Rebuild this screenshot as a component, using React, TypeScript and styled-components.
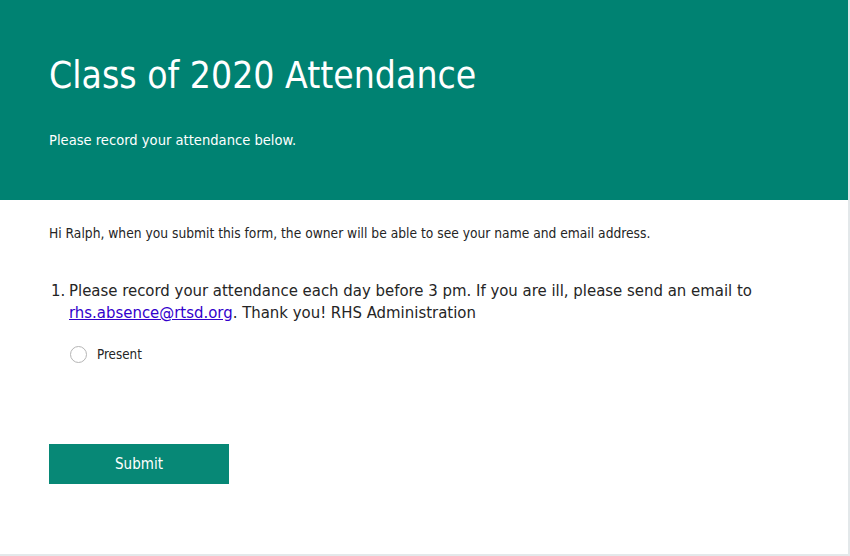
import React from "react";
import styled, { createGlobalStyle } from "styled-components";

const Global = createGlobalStyle`
  html, body { margin: 0; padding: 0; background: #e9eef0; }
  body { font-family: "DejaVu Sans Condensed", "DejaVu Sans", sans-serif; }
  * { box-sizing: border-box; }
`;

const Card = styled.div`
  width: 850px;
  height: 556px;
  background: #ffffff;
  border-right: 2px solid #e3e8ea;
  border-bottom: 2px solid #e3e8ea;
  display: flex;
  flex-direction: column;
`;

const Header = styled.header`
  background: #008272;
  height: 200px;
  padding: 52px 49px 0;
  color: #ffffff;
`;

const Title = styled.h1`
  margin: 0;
  font-size: 37px;
  font-weight: normal;
  line-height: 48px;
`;

const Subtitle = styled.p`
  margin: 30px 0 0;
  font-size: 14.6px;
  line-height: 20px;
`;

const Body = styled.main`
  padding: 24px 49px 0;
  color: #252525;
`;

const Notice = styled.p`
  margin: 0;
  font-size: 13.7px;
  line-height: 18px;
`;

const Question = styled.div`
  margin-top: 38px;
  display: flex;
  font-size: 16.6px;
  line-height: 22px;
  color: #252525;
`;

const Number = styled.span`
  width: 20px;
  padding-left: 2px;
  flex: none;
`;

const QText = styled.div`
  flex: 1;
`;

const Link = styled.a`
  color: #3300cc;
  text-decoration: underline;
`;

const Options = styled.div`
  margin-top: 22px;
  padding-left: 21px;
`;

const Option = styled.label`
  display: flex;
  align-items: center;
  gap: 10px;
  font-size: 13.3px;
  color: #252525;
`;

const Radio = styled.span`
  width: 17px;
  height: 17px;
  border-radius: 50%;
  border: 1px solid #b5b5b5;
  background: #fff;
  flex: none;
`;

const SubmitButton = styled.button`
  margin-top: 81px;
  width: 180px;
  height: 40px;
  border: none;
  background: #078876;
  color: #ffffff;
  font-family: inherit;
  font-size: 15px;
  cursor: pointer;
`;

export default function App() {
  return (
    <>
      <Global />
      <Card>
        <Header>
          <Title>Class of 2020 Attendance</Title>
          <Subtitle>Please record your attendance below.</Subtitle>
        </Header>
        <Body>
          <Notice>
            Hi Ralph, when you submit this form, the owner will be able to see your name and email address.
          </Notice>
          <Question>
            <Number>1.</Number>
            <QText>
              Please record your attendance each day before 3 pm. If you are ill, please send an email to{" "}
              <Link href="#">rhs.absence@rtsd.org</Link>. Thank you! RHS Administration
            </QText>
          </Question>
          <Options>
            <Option>
              <Radio />
              Present
            </Option>
          </Options>
          <SubmitButton>Submit</SubmitButton>
        </Body>
      </Card>
    </>
  );
}
